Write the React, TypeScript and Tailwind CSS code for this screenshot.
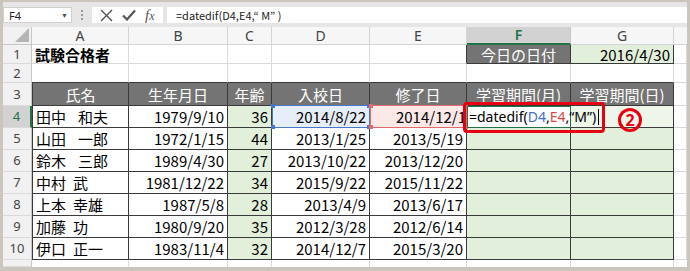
import React from "react";

const jp = "font-['Noto_Sans_CJK_JP','Noto_Sans',sans-serif]";
const ui = "font-['Noto_Sans','Liberation_Sans',sans-serif]";

const grid = "border-r border-b border-[#dadada]";
const dark = "border-[#3a3a3a]";
const green = "bg-[#e2efda]";

type Row = [string, string, string, string, string, string];

// name parts are split so the gap between family and given name can be sized like the sheet
const rows: Row[] = [
  ["田中", "和夫", "1979/9/10", "36", "2014/8/22", "2014/12/1"],
  ["山田", "一郎", "1972/1/15", "44", "2013/1/25", "2013/5/19"],
  ["鈴木", "三郎", "1989/4/30", "27", "2013/10/22", "2013/12/20"],
  ["中村", "武", "1981/12/22", "34", "2015/9/22", "2015/11/22"],
  ["上本", "幸雄", "1987/5/8", "28", "2013/4/9", "2013/6/17"],
  ["加藤", "功", "1980/9/20", "35", "2012/3/28", "2012/6/14"],
  ["伊口", "正一", "1983/11/4", "32", "2014/12/7", "2015/3/20"],
];

function RowHead({ n, active }: { n?: string; active?: boolean }) {
  return (
    <div
      className={`w-[29px] shrink-0 flex items-center justify-center text-[13px] leading-none border-b border-[#dadada] ${ui} ${
        active
          ? "bg-[#d2d2d2] text-[#217346] border-r-2 border-r-[#217346]"
          : "bg-[#f1f1f1] text-[#444] border-r border-r-[#c6c6c6]"
      }`}
    >
      {n}
    </div>
  );
}

function Handles({ color }: { color: string }) {
  return (
    <>
      <span className={`absolute -left-[2px] -top-[2px] size-[4px] ${color}`} />
      <span className={`absolute -right-[2px] -top-[2px] size-[4px] ${color}`} />
      <span className={`absolute -left-[2px] -bottom-[2px] size-[4px] ${color}`} />
      <span className={`absolute -right-[2px] -bottom-[2px] size-[4px] ${color}`} />
    </>
  );
}

function FormulaBar() {
  return (
    <div className="h-[25px] shrink-0 bg-[#e6e6e6] flex items-start pt-[5px]">
      <div className={`w-[69px] h-[16px] bg-white border border-[#d0d0d0] flex items-center justify-between pl-[5px] pr-[3px] text-[11px] leading-none text-[#222] ${ui}`}>
        <span>F4</span>
        <span className="text-[7px] text-[#555]">▼</span>
      </div>
      <div className="w-[20px] h-[16px] flex flex-col items-center justify-center gap-[2px]">
        <span className="size-[2px] bg-[#9a9a9a]" />
        <span className="size-[2px] bg-[#9a9a9a]" />
        <span className="size-[2px] bg-[#9a9a9a]" />
      </div>
      <div className="w-[71px] h-[16px] bg-white flex items-center justify-around px-[4px]">
        <svg width="13" height="13" viewBox="0 0 13 13">
          <path d="M1 1 L12 12 M12 1 L1 12" stroke="#555" strokeWidth="1.4" />
        </svg>
        <svg width="14" height="12" viewBox="0 0 14 12">
          <path d="M1 6.5 L5 10.5 L13 1.5" stroke="#555" strokeWidth="2.2" fill="none" />
        </svg>
        <span className="font-['Liberation_Serif',serif] italic text-[15px] leading-none text-[#555]">
          f<span className="text-[12px]">x</span>
        </span>
      </div>
      <div className={`ml-[4px] flex-1 h-[16px] bg-white flex items-center pl-[9px] text-[11px] leading-none text-[#222] whitespace-nowrap ${jp}`}>
        =datedif(D4,E4,“ M” )
      </div>
    </div>
  );
}

function ColHeads() {
  const letters: [string, string][] = [
    ["A", "w-[97px]"],
    ["B", "w-[99px]"],
    ["C", "w-[44px]"],
    ["D", "w-[98px]"],
    ["E", "w-[97px]"],
    ["F", "w-[104px]"],
    ["G", "w-[103px]"],
  ];
  return (
    <div className={`flex h-[18px] shrink-0 text-[14px] leading-none ${ui}`}>
      <div className="w-[29px] shrink-0 bg-[#f1f1f1] border-r border-b border-[#c6c6c6] relative">
        <svg className="absolute right-[2px] bottom-[2px]" width="14" height="14" viewBox="0 0 14 14">
          <path d="M14 0 L14 14 L0 14 Z" fill="#b5b5b5" />
        </svg>
      </div>
      {letters.map(([l, w]) =>
        l === "F" ? (
          <div key={l} className={`${w} shrink-0 flex items-center justify-center bg-[#d2d2d2] text-[#217346] font-semibold border-r border-[#c6c6c6] border-b-2 border-b-[#217346]`}>
            {l}
          </div>
        ) : (
          <div key={l} className={`${w} shrink-0 flex items-center justify-center bg-[#f6f6f6] text-[#444] border-r border-b border-[#d4d4d4]`}>
            {l}
          </div>
        )
      )}
      <div className="flex-1 bg-[#f6f6f6] border-b border-[#d4d4d4]" />
    </div>
  );
}

export default function App() {
  const cellBase = `shrink-0 flex items-center text-[15px] leading-none text-black whitespace-nowrap ${jp}`;
  const heads = ["氏名", "生年月日", "年齢", "入校日", "修了日", "学習期間(月)", "学習期間(日)"];
  const headW = ["w-[97px]", "w-[99px]", "w-[44px]", "w-[98px]", "w-[97px]", "w-[104px]", "w-[103px]"];

  return (
    <div className="relative w-[690px] h-[271px] bg-[#cbc6bd] px-[3px] pt-[2px] pb-[4px]">
      <div className="flex flex-col h-full bg-white overflow-hidden">
        <FormulaBar />
        <ColHeads />

        {/* row 1 */}
        <div className="flex h-[19px] shrink-0">
          <RowHead n="1" />
          <div className={`${cellBase} w-[97px] ${grid} pl-[3px] font-bold`}>試験合格者</div>
          <div className={`${cellBase} w-[99px] ${grid}`} />
          <div className={`${cellBase} w-[44px] ${grid}`} />
          <div className={`${cellBase} w-[98px] ${grid}`} />
          <div className={`${cellBase} w-[97px] ${grid} border-r-[#3a3a3a]`} />
          <div className={`${cellBase} w-[104px] border-r border-b ${dark} bg-[#747474] text-white justify-center`}>今日の日付</div>
          <div className={`${cellBase} w-[103px] border-r border-b ${dark} ${green} justify-end pr-[3px]`}>2016/4/30</div>
          <div className={`flex-1 ${grid}`} />
        </div>

        {/* row 2 */}
        <div className="flex h-[19px] shrink-0">
          <RowHead n="2" />
          {headW.map((w, i) => (
            <div key={i} className={`${cellBase} ${w} border-r border-b border-[#dadada] border-b-[#3a3a3a]`} />
          ))}
          <div className={`flex-1 ${grid}`} />
        </div>

        {/* row 3 */}
        <div className="flex h-[23px] shrink-0">
          <RowHead n="3" />
          {heads.map((h, i) => (
            <div
              key={h}
              className={`${cellBase} ${headW[i]} border-r border-b ${dark} bg-[#747474] text-white justify-center ${i === 0 ? "border-l" : ""}`}
            >
              {h}
            </div>
          ))}
          <div className={`flex-1 ${grid}`} />
        </div>

        {/* rows 4-10 */}
        {rows.map((r, idx) => {
          const first = idx === 0;
          const wide = idx < 3;
          return (
            <div key={idx} className="flex h-[22px] shrink-0">
              <RowHead n={String(idx + 4)} active={first} />
              <div className={`${cellBase} w-[97px] border-l border-r border-b ${dark} pl-[3px]`}>
                {r[0]}
                <span className={wide ? "ml-[12px]" : "ml-[7px]"}>{r[1]}</span>
              </div>
              <div className={`${cellBase} w-[99px] border-r border-b ${dark} justify-end pr-[3px]`}>{r[2]}</div>
              <div className={`${cellBase} w-[44px] border-r border-b ${dark} ${green} justify-end pr-[3px]`}>{r[3]}</div>
              {first ? (
                <div className={`${cellBase} w-[98px] relative border border-[#4a78c8] -mt-[1px] h-[23px] bg-[#e6eef9] justify-end pr-[3px]`}>
                  {r[4]}
                  <Handles color="bg-[#4a78c8]" />
                </div>
              ) : (
                <div className={`${cellBase} w-[98px] border-r border-b ${dark} justify-end pr-[3px]`}>{r[4]}</div>
              )}
              {first ? (
                <div className={`${cellBase} w-[97px] relative border border-[#e06c6c] -mt-[1px] h-[23px] bg-[#fde8e8] justify-end pr-0`}>
                  {r[5]}
                  <Handles color="bg-[#e06c6c]" />
                </div>
              ) : (
                <div className={`${cellBase} w-[97px] border-r border-b ${dark} justify-end pr-[3px]`}>{r[5]}</div>
              )}
              {first ? (
                <div className={`shrink-0 w-[104px] relative z-10 flex items-center bg-white border border-[#217346] pl-[1px] text-[14px] leading-none text-black whitespace-nowrap overflow-visible ${ui}`}>
                  <span className="shrink-0">=datedif(</span>
                  <span className="shrink-0 text-[#3f6fd0]">D4</span>
                  <span className="shrink-0">,</span>
                  <span className="shrink-0 text-[#e04848]">E4</span>
                  <span className="shrink-0">,“M”)</span>
                  <span className="ml-[2px] w-[1px] h-[16px] shrink-0 bg-black" />
                </div>
              ) : (
                <div className={`${cellBase} w-[104px] border-r border-b ${dark} ${green}`} />
              )}
              <div className={`${cellBase} w-[103px] border-r border-b ${dark} ${first ? "bg-[#eef5e9]" : green}`} />
              <div className={`flex-1 ${grid}`} />
            </div>
          );
        })}

        {/* partial row 11 */}
        <div className="flex flex-1">
          <RowHead />
          {headW.map((w, i) => (
            <div key={i} className={`${w} shrink-0 border-r border-[#dadada]`} />
          ))}
        </div>
      </div>

      {/* annotation */}
      <div className="absolute z-20 left-[463px] top-[102px] w-[142px] h-[31px] border-[3px] border-[#e60012] rounded-[4px]" />
      <div className={`absolute z-20 left-[618px] top-[108px] size-[24px] rounded-full border-[3px] border-[#e60012] flex items-center justify-center text-[#e60012] text-[16px] font-bold leading-none ${ui}`}>
        2
      </div>
    </div>
  );
}
